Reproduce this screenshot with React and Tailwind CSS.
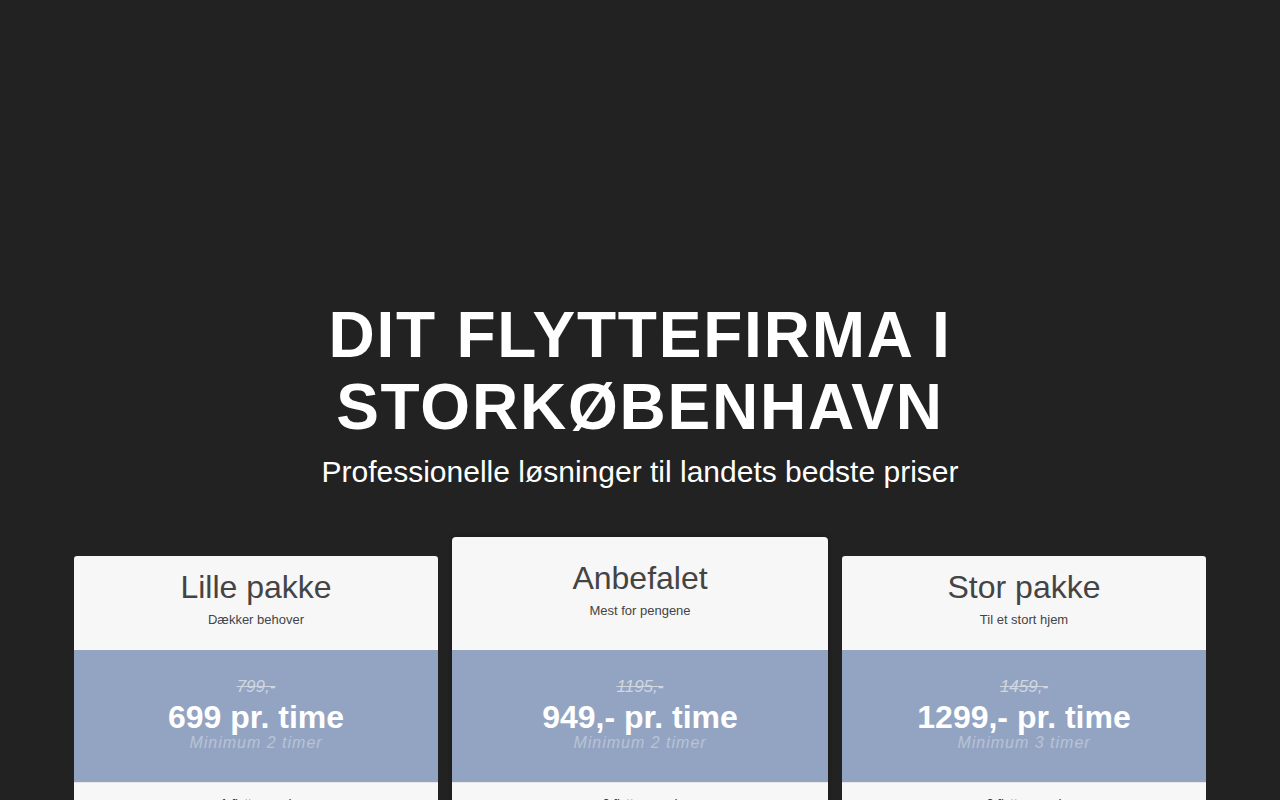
import React from "react";

const plans = [
  { name: "Lille pakke", sub: "Dækker behover", old: "799,-", price: "699 pr. time", min: "Minimum 2 timer", feat: "1 flyttemand", featured: false },
  { name: "Anbefalet", sub: "Mest for pengene", old: "1195,-", price: "949,- pr. time", min: "Minimum 2 timer", feat: "2 flyttemænd", featured: true },
  { name: "Stor pakke", sub: "Til et stort hjem", old: "1459,-", price: "1299,- pr. time", min: "Minimum 3 timer", feat: "3 flyttemænd", featured: false },
];

function Card({ p }) {
  return (
    <div className={p.featured ? "w-[376px] bg-[#f7f7f7] rounded-t-[4px] shadow-[0_0_4px_rgba(0,0,0,0.35)]" : "w-[364px] mt-[19px] bg-[#f7f7f7] rounded-t-[3px]"}>
      <div className={p.featured ? "pt-[22px] pb-[30px] text-center" : "pt-[12px] pb-[21px] text-center"}>
        <div className="text-[32px] leading-[38px] text-[#444444]">{p.name}</div>
        <div className="mt-[5px] text-[13px] leading-[18px] text-[#444444]">{p.sub}</div>
      </div>
      <div className="bg-[#93a4c2] pt-[28px] pb-[29px] text-center">
        <div className="text-[17px] leading-[18px] italic line-through text-[#d0d6e0]">{p.old}</div>
        <div className="mt-[5px] text-[32px] leading-[32px] font-bold text-white">{p.price}</div>
        <div className="text-[16px] leading-[20px] italic tracking-[1px] text-[#b9c3d6]">{p.min}</div>
      </div>
      <div className="pt-[12px] pb-[12px] text-center text-[13px] leading-[18px] text-[#333333] border-t border-[#e6e6e6]">{p.feat}</div>
    </div>
  );
}

export default function App() {
  return (
    <div className="min-h-[800px] bg-[#222222] font-['Liberation_Sans',Arial,sans-serif] overflow-hidden">
      <div className="pt-[299px] text-center text-white">
        <h1 className="text-[64px] leading-[72px] font-bold tracking-[1.8px]">DIT FLYTTEFIRMA I<br />STORKØBENHAVN</h1>
        <p className="mt-[10px] text-[30px] leading-[38px]">Professionelle løsninger til landets bedste priser</p>
      </div>
      <div className="mt-[46px] flex justify-center items-start gap-[14px]">
        {plans.map((p) => (
          <Card key={p.name} p={p} />
        ))}
      </div>
    </div>
  );
}
